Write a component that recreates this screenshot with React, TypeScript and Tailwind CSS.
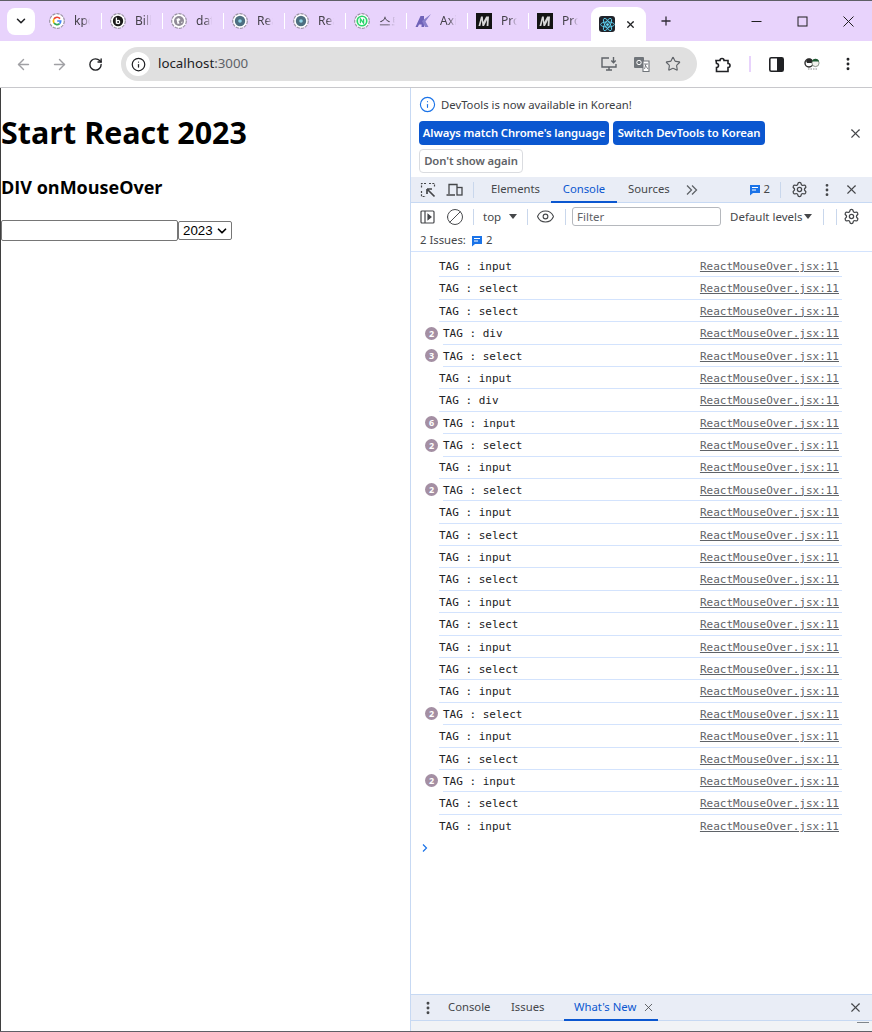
import { ArrowLeft, ArrowRight, RotateCw, Info, Star, MoreVertical, X, Plus, ChevronDown, Ban, Eye, Settings } from "lucide-react"

const ui = "font-['Noto_Sans','Open_Sans',sans-serif]"

const logs: { tag: string; count?: number }[] = [
  { tag: "input" },
  { tag: "select" },
  { tag: "select" },
  { tag: "div", count: 2 },
  { tag: "select", count: 3 },
  { tag: "input" },
  { tag: "div" },
  { tag: "input", count: 6 },
  { tag: "select", count: 2 },
  { tag: "input" },
  { tag: "select", count: 2 },
  { tag: "input" },
  { tag: "select" },
  { tag: "input" },
  { tag: "select" },
  { tag: "input" },
  { tag: "select" },
  { tag: "input" },
  { tag: "select" },
  { tag: "input" },
  { tag: "select", count: 2 },
  { tag: "input" },
  { tag: "select" },
  { tag: "input", count: 2 },
  { tag: "select" },
  { tag: "input" },
]

const tabs = [
  { label: "kpc", icon: "google" },
  { label: "Bill", icon: "b" },
  { label: "dat", icon: "globe" },
  { label: "Rea", icon: "react" },
  { label: "Rea", icon: "react" },
  { label: "스트", icon: "n" },
  { label: "Axi", icon: "axios" },
  { label: "Pro", icon: "m" },
  { label: "Pro", icon: "m" },
]

function ReactLogo({ size = 12, color = "#61dafb" }: { size?: number; color?: string }) {
  return (
    <svg width={size} height={size} viewBox="-12 -12 24 24" fill="none" stroke={color} strokeWidth="1.4">
      <circle r="2.2" fill={color} stroke="none" />
      <ellipse rx="11" ry="4.2" />
      <ellipse rx="11" ry="4.2" transform="rotate(60)" />
      <ellipse rx="11" ry="4.2" transform="rotate(120)" />
    </svg>
  )
}

function TabIcon({ icon }: { icon: string }) {
  if (icon === "m") {
    return (
      <svg width="16" height="16" viewBox="0 0 16 16">
        <rect width="16" height="16" fill="#141414" />
        <path d="M2.5 13 L5 3.5 H6.8 L7.3 9 L10.2 3.5 H13 L12.4 13 H10.6 L11 7 L8 13 H6.4 L5.8 7 L4.3 13 Z" fill="#d8d8d8" />
      </svg>
    )
  }
  if (icon === "axios") {
    return (
      <svg width="16" height="16" viewBox="0 0 16 16" fill="#6f62b8">
        <path d="M0.5 14 L5.5 3 H9 L9 14 H6.5 L6.6 11.5 H4 L2.8 14 Z" />
        <path d="M7 8 L16 1 L10.5 8.5 L13.5 14 H10 L8.5 11 Z" fill="#8a7fcb" />
      </svg>
    )
  }
  return (
    <svg width="16" height="16" viewBox="0 0 16 16">
      <circle cx="8" cy="8" r="7.3" fill="#fff" stroke="#9a93a3" strokeWidth="1.2" strokeDasharray="3.2 1" />
      {icon === "google" && (
        <g fill="none" strokeWidth="1.7">
          <path d="M11 5.6 A3.7 3.7 0 0 0 5 6" stroke="#ea4335" />
          <path d="M5 6 A3.7 3.7 0 0 0 5 10" stroke="#fbbc05" />
          <path d="M5 10 A3.7 3.7 0 0 0 10.6 10.6" stroke="#34a853" />
          <path d="M10.6 10.6 A3.7 3.7 0 0 0 11.7 8 H8.2" stroke="#4285f4" />
        </g>
      )}
      {icon === "b" && (
        <g>
          <circle cx="8" cy="8" r="5.2" fill="#1a1a1a" />
          <path d="M6.4 4.6 V10.6" stroke="#fff" strokeWidth="1.3" />
          <circle cx="8.1" cy="9" r="1.6" fill="none" stroke="#fff" strokeWidth="1.2" />
        </g>
      )}
      {icon === "globe" && (
        <g>
          <circle cx="8" cy="8" r="5" fill="#8f8a96" />
          <path d="M5.5 6 L8 5 L9.5 7 L7.5 8 L8.5 10.5 L6.5 11 Z M10 9 L11.5 8.5 L11 10.5 Z" fill="#fff" />
        </g>
      )}
      {icon === "react" && (
        <g>
          <circle cx="8" cy="8" r="5.2" fill="#4d6f80" />
          <circle cx="8" cy="8" r="1.8" fill="#8fd3e6" />
        </g>
      )}
      {icon === "n" && (
        <g>
          <circle cx="8" cy="8" r="5.6" fill="#2bd46c" />
          <circle cx="8" cy="8" r="3.9" fill="#fff" />
          <path d="M6.4 10.2 V5.8 L9.6 10.2 V5.8" fill="none" stroke="#2bd46c" strokeWidth="1.3" />
        </g>
      )}
    </svg>
  )
}

function Tab({ label, icon, last }: { label: string; icon: string; last: boolean }) {
  return (
    <div className="flex h-[16px] w-[61px] shrink-0 items-center">
      <div className="ml-[1px] flex w-[59px] items-center justify-start pl-[7px]">
        <TabIcon icon={icon} />
        <span className="ml-[9px] w-[16px] overflow-hidden whitespace-nowrap text-[12px] leading-none text-[#45414a] [mask-image:linear-gradient(to_right,black_55%,transparent)]">
          {label}
        </span>
      </div>
      {!last && <div className="h-[16px] w-[1.5px] shrink-0 bg-white" />}
    </div>
  )
}

function MessageIcon({ size = 12 }: { size?: number }) {
  return (
    <svg width={size} height={size} viewBox="0 0 12 12">
      <path d="M1 1 H11 V9 H4 L1 11.5 Z" fill="#1a73e8" />
      <path d="M3 3.5 H9 M3 6 H7" stroke="#fff" strokeWidth="1" />
    </svg>
  )
}

function CogIcon() {
  return <Settings size={17} strokeWidth={1.8} className="text-[#45474a]" />
}

function Divider({ h = "h-4" }: { h?: string }) {
  return <div className={`${h} w-px shrink-0 bg-[#c9d7ec]`} />
}

function LogRow({ tag, count, last }: { tag: string; count?: number; last: boolean }) {
  return (
    <div className="relative flex h-[22.4px] items-center justify-between font-['DejaVu_Sans_Mono',monospace] text-[11px] text-[#202124]">
      <div
        className={`flex h-full flex-1 items-center justify-between pr-[3px] pt-[3px] ${count ? "ml-[4px]" : ""} ${last ? "" : "border-b border-[#d3e3fd]"}`}
      >
        <span className="whitespace-pre">{`TAG : ${tag}`}</span>
        <span className="whitespace-pre text-[#5f6368] underline">ReactMouseOver.jsx:11</span>
      </div>
      {count && (
        <span className="absolute left-[-14px] top-[4.5px] flex h-[13px] w-[13px] items-center justify-center rounded-full bg-[#a48fa3] font-['Noto_Sans',sans-serif] text-[9px] font-bold leading-none text-white">
          {count}
        </span>
      )}
    </div>
  )
}

function PageContent() {
  return (
    <main className="w-[410px] shrink-0 border-l border-[#3f3f3f] font-['Open_Sans',sans-serif] text-black">
      <h1 className="mt-[21px] text-[30.4px] font-bold leading-[48px]">Start React 2023</h1>
      <h3 className="mt-[17px] text-[18px] font-bold leading-[26px]">DIV onMouseOver</h3>
      <div className="mt-[20px] flex items-center">
        <div className="h-[21px] w-[177px] rounded-[2px] border border-[#767676] bg-white" />
        <div className="flex h-[19px] w-[54px] items-center rounded-[2px] border border-[#767676] pl-[4px] font-['Liberation_Sans',sans-serif] text-[13.3px]">
          2023
          <ChevronDown size={14} strokeWidth={3} className="ml-[2px]" />
        </div>
      </div>
    </main>
  )
}

function DevTools() {
  return (
    <aside className={`flex min-w-0 flex-1 flex-col border-l border-[#c7d9f3] ${ui}`}>
      {/* Language infobar */}
      <div className="h-[89px] shrink-0 text-[11.3px] leading-none">
        <div className="flex h-[33px] items-center pl-[8px] text-[#3c4043]">
          <Info size={17} strokeWidth={1.6} className="text-[#1a73e8]" />
          <span className="ml-[5px]">DevTools is now available in Korean!</span>
        </div>
        <div className="flex items-center pl-[8px]">
          <div className="flex h-[24px] w-[190px] items-center justify-center whitespace-nowrap rounded-[4px] bg-[#0b57d0] text-[11.3px] font-semibold tracking-[-0.1px] text-white">
            Always match Chrome's language
          </div>
          <div className="ml-[4px] flex h-[24px] w-[152px] items-center justify-center whitespace-nowrap rounded-[4px] bg-[#0b57d0] text-[11.3px] font-semibold tracking-[-0.1px] text-white">
            Switch DevTools to Korean
          </div>
          <X size={15} strokeWidth={1.8} className="ml-auto mr-[9px] text-[#45474a]" />
        </div>
        <div className="ml-[8px] mt-[4px] flex h-[24px] w-[104px] items-center justify-center whitespace-nowrap rounded-[4px] border border-[#dadce0] text-[11.3px] font-semibold tracking-[-0.1px] text-[#5f6368]">
          Don't show again
        </div>
      </div>

      {/* DevTools tab strip */}
      <div className="flex h-[26px] shrink-0 items-center border-b border-[#c7d9f3] bg-[#e9edf6] text-[11.3px] text-[#45474a]">
        <svg width="16" height="16" viewBox="0 0 16 16" fill="none" stroke="#45474a" className="ml-[9px]">
          <path d="M6 1.5 H1.5 V6 M1.5 9 V14.5 H6 M9 1.5 H14.5 V5" strokeDasharray="2 1.3" strokeWidth="1.2" />
          <path d="M7 7 L14.5 14.5 M7 7 H12 M7 7 V12" strokeWidth="1.7" />
        </svg>
        <svg width="17" height="16" viewBox="0 0 17 16" fill="none" stroke="#45474a" strokeWidth="1.3" className="ml-[10px]">
          <path d="M3 12 V2.5 H11 V5 M0.5 13 H9" />
          <rect x="11" y="5.5" width="5" height="7.5" />
        </svg>
        <div className="ml-[10px]">
          <Divider />
        </div>
        <span className="ml-[17px] w-[48px] whitespace-nowrap">Elements</span>
        <div className="relative ml-[12px] flex h-full w-[66px] items-center justify-center text-[#0b57d0]">
          Console
          <div className="absolute bottom-[-1px] left-0 h-[2px] w-full bg-[#0b57d0]" />
        </div>
        <span className="ml-[11px] w-[42px] whitespace-nowrap">Sources</span>
        <span className="ml-[16px] flex">
          <svg width="12" height="12" viewBox="0 0 12 12" fill="none" stroke="#5f6368" strokeWidth="1.3">
            <path d="M1 1.5 L5.5 6 L1 10.5 M6 1.5 L10.5 6 L6 10.5" />
          </svg>
        </span>
        <div className="ml-auto flex items-center">
          <MessageIcon />
          <span className="ml-[3px]">2</span>
          <div className="ml-[10px]">
            <Divider />
          </div>
          <div className="ml-[10px] flex">
            <CogIcon />
          </div>
          <MoreVertical size={16} strokeWidth={2.2} className="ml-[11px]" />
          <X size={15} strokeWidth={1.8} className="ml-[9px] mr-[13px]" />
        </div>
      </div>

      {/* Console toolbar */}
      <div className="flex h-[27px] shrink-0 items-center text-[11.5px] text-[#45474a]">
        <svg width="15" height="14" viewBox="0 0 15 14" fill="none" stroke="#45474a" strokeWidth="1.2" className="ml-[9px]">
          <rect x="1" y="1" width="13" height="12" rx="1" />
          <path d="M5 1 V13" />
          <path d="M8 4.5 L11 7 L8 9.5 Z" fill="#45474a" />
        </svg>
        <Ban size={18} strokeWidth={1.3} className="ml-[11px] -scale-x-100" />
        <div className="ml-[9px]">
          <Divider />
        </div>
        <span className="ml-[9px] w-[18px]">top</span>
        <span className="ml-[8px] h-0 w-0 border-x-[4px] border-t-[5px] border-x-transparent border-t-[#45474a]" />
        <div className="ml-[10px]">
          <Divider />
        </div>
        <Eye size={19} strokeWidth={1.4} className="ml-[8px]" />
        <div className="ml-[10px]">
          <Divider />
        </div>
        <div className="ml-[6px] flex h-[19px] w-[149px] items-center rounded-[3px] border border-[#b5b8bd] pl-[4px] text-[#5f6368]">
          Filter
        </div>
        <span className="ml-[9px] w-[71px] whitespace-nowrap">Default levels</span>
        <span className="ml-[3px] h-0 w-0 border-x-[4px] border-t-[5px] border-x-transparent border-t-[#45474a]" />
        <div className="ml-[11px]">
          <Divider />
        </div>
        <div className="ml-[12px]">
          <Divider />
        </div>
        <div className="ml-[6px] flex">
          <CogIcon />
        </div>
      </div>

      {/* Issues line */}
      <div className="flex h-[22px] shrink-0 items-center border-b border-[#d3e3fd] pl-[9px] text-[11.3px] text-[#45474a]">
        <span className="w-[44px] whitespace-nowrap">2 Issues:</span>
        <span className="ml-[7px] flex">
          <MessageIcon />
        </span>
        <span className="ml-[3px]">2</span>
      </div>

      {/* Log messages */}
      <div className="flex-1 pl-[28px] pr-[30px] pt-[3px]">
        {logs.map((log, i) => (
          <LogRow key={i} tag={log.tag} count={log.count} last={i === logs.length - 1} />
        ))}
        <svg width="8" height="10" viewBox="0 0 8 10" fill="none" stroke="#1a73e8" strokeWidth="1.2" className="ml-[-18px] mt-[6px]">
          <path d="M2 1.5 L5.5 5 L2 8.5" />
        </svg>
      </div>

      {/* Drawer */}
      <div className="flex h-[27px] shrink-0 items-center border-y border-[#c7d9f3] bg-[#e9edf6] text-[11.3px] text-[#45474a]">
        <MoreVertical size={16} strokeWidth={2.4} className="ml-[9px]" />
        <span className="ml-[12px] w-[43px] whitespace-nowrap">Console</span>
        <span className="ml-[20px] w-[32px] whitespace-nowrap">Issues</span>
        <div className="relative ml-[21px] flex h-full w-[94px] items-center pl-[10px] text-[#0b57d0]">
          <span className="w-[63px] whitespace-nowrap">What's New</span>
          <X size={13} strokeWidth={1.5} className="ml-[5px] text-[#45474a]" />
          <div className="absolute bottom-[-1px] left-0 h-[2px] w-full bg-[#0b57d0]" />
        </div>
        <X size={15} strokeWidth={1.8} className="ml-auto mr-[9px]" />
      </div>
      <div className="relative h-[10px] shrink-0 bg-[#f1f3f6]">
        <div className="absolute right-[3px] top-[1px] h-px w-[12px] bg-[#80868b]" />
      </div>
    </aside>
  )
}

export default function App() {
  return (
    <div className={`flex h-[1032px] w-[872px] flex-col overflow-hidden bg-white ${ui}`}>
      {/* Title bar with tabs */}
      <div className="flex h-[41px] shrink-0 items-center border-t border-[#5f5f66] bg-[#e8d3fc]">
        <div className="ml-[7px] flex h-[27px] w-[28px] shrink-0 items-center justify-center rounded-[8px] bg-white">
          <ChevronDown size={14} strokeWidth={2.6} className="text-[#202124]" />
        </div>
        <div className="ml-[6px] flex items-center">
          {tabs.map((tab, i) => (
            <Tab key={i} label={tab.label} icon={tab.icon} last={i === tabs.length - 1} />
          ))}
        </div>
        <div className="ml-[1px] flex h-[34px] w-[55px] shrink-0 items-center self-end rounded-t-[9px] bg-white pl-[8px]">
          <div className="flex h-4 w-4 items-center justify-center rounded-[3px] bg-[#20232a]">
            <ReactLogo size={15} />
          </div>
          <X size={11} strokeWidth={2.8} className="ml-[10px] text-[#202124]" />
        </div>
        <Plus size={14} strokeWidth={2.2} className="ml-[13px] text-[#302c36]" />
        <div className="ml-auto flex items-center">
          <svg width="11" height="11" viewBox="0 0 11 11" stroke="#1f1f1f" fill="none" strokeWidth="1">
            <path d="M0.5 5.5 H10.5" />
          </svg>
          <svg width="11" height="11" viewBox="0 0 11 11" stroke="#1f1f1f" fill="none" strokeWidth="1" className="ml-[35px]">
            <rect x="1" y="1" width="9" height="9" />
          </svg>
          <svg width="11" height="11" viewBox="0 0 11 11" stroke="#1f1f1f" fill="none" strokeWidth="1" className="ml-[35px] mr-[18px]">
            <path d="M0.5 0.5 L10.5 10.5 M10.5 0.5 L0.5 10.5" />
          </svg>
        </div>
      </div>

      {/* Address toolbar */}
      <div className="flex h-[47px] shrink-0 items-center rounded-t-[8px] border-b border-[#c8c8cc] bg-white">
        <ArrowLeft size={17} strokeWidth={2} className="ml-[15px] text-[#a0a0a4]" />
        <ArrowRight size={17} strokeWidth={2} className="ml-[19px] text-[#a0a0a4]" />
        <RotateCw size={15} strokeWidth={2.2} className="ml-[20px] text-[#202124]" />
        <div className="ml-[18px] flex h-[34px] w-[576px] shrink-0 items-center rounded-full bg-[#e0e0e0] pl-[5px]">
          <div className="flex h-[24px] w-[24px] items-center justify-center rounded-full bg-white">
            <Info size={15} strokeWidth={2} className="text-[#202124]" />
          </div>
          <span className="ml-[8px] text-[13.3px] text-[#202124]">
            localhost<span className="text-[#5f6368]">:3000</span>
          </span>
          <div className="ml-auto flex items-center text-[#5f6368]">
            <svg width="17" height="16" viewBox="0 0 17 16" fill="none" stroke="#5f6368" strokeWidth="1.4">
              <path d="M8 2 H1 V11 H15 V8 M5 14 H11 M8 11 V14" />
              <path d="M12.5 1 V6.5 M10.3 4.5 L12.5 6.8 L14.7 4.5" />
            </svg>
            <svg width="17" height="17" viewBox="0 0 17 17" className="ml-[15px]">
              <rect x="1" y="1" width="10" height="11" rx="1" fill="#70757a" />
              <path d="M6 5 H10 V15.5 H16 V5 H9" fill="#fff" stroke="#70757a" strokeWidth="1.1" />
              <path d="M11 8 H15 M13 8 L11.5 13 M12 9 L15 13" stroke="#70757a" strokeWidth="0.9" fill="none" />
              <circle cx="6" cy="6.5" r="2.2" fill="none" stroke="#fff" strokeWidth="1" />
            </svg>
            <Star size={16} strokeWidth={1.7} className="ml-[15px] mr-[16px] text-[#5f6368]" />
          </div>
        </div>
        <svg width="16" height="17" viewBox="0 0 16 17" fill="none" stroke="#202124" strokeWidth="1.6" className="ml-[18px]">
          <path d="M1 4.5 H5 A2 2 0 0 1 9 4.5 H13 V7.5 A2 2 0 0 1 13 11.5 V15.5 H1.5 V11.5 A2 2 0 0 0 1.5 7.5 Z" />
        </svg>
        <div className="ml-[18px] h-[16px] w-[2px] bg-[#e8d3fc]" />
        <svg width="15" height="15" viewBox="0 0 15 15" className="ml-[18px]">
          <rect x="0.8" y="0.8" width="13.4" height="13.4" rx="1.5" fill="#fff" stroke="#202124" strokeWidth="1.6" />
          <rect x="8" y="1" width="6" height="13" fill="#202124" />
        </svg>
        <svg width="17" height="15" viewBox="0 0 17 15" className="ml-[20px]">
          <circle cx="5" cy="6" r="4" fill="#fff" stroke="#2b2b2b" strokeWidth="1.4" />
          <path d="M2 4 A3.5 3.5 0 0 1 8 3 L8 6 L3 6 Z" fill="#2b2b2b" />
          <circle cx="11.5" cy="6" r="3.6" fill="#f2f2ee" stroke="#5f6b5f" strokeWidth="0.7" />
          <path d="M8 4.5 A3.6 3.6 0 0 1 15 4.5 Z" fill="#1e5a33" />
          <path d="M4 12 H13" stroke="#8a8a8a" strokeWidth="1.2" strokeDasharray="1.5 1" />
        </svg>
        <MoreVertical size={16} strokeWidth={2.4} className="ml-[19px] text-[#202124]" />
      </div>

      {/* Browser viewport */}
      <div className="flex min-h-0 flex-1 border-b border-[#5f5f66]">
        <PageContent />
        <DevTools />
      </div>
    </div>
  )
}
